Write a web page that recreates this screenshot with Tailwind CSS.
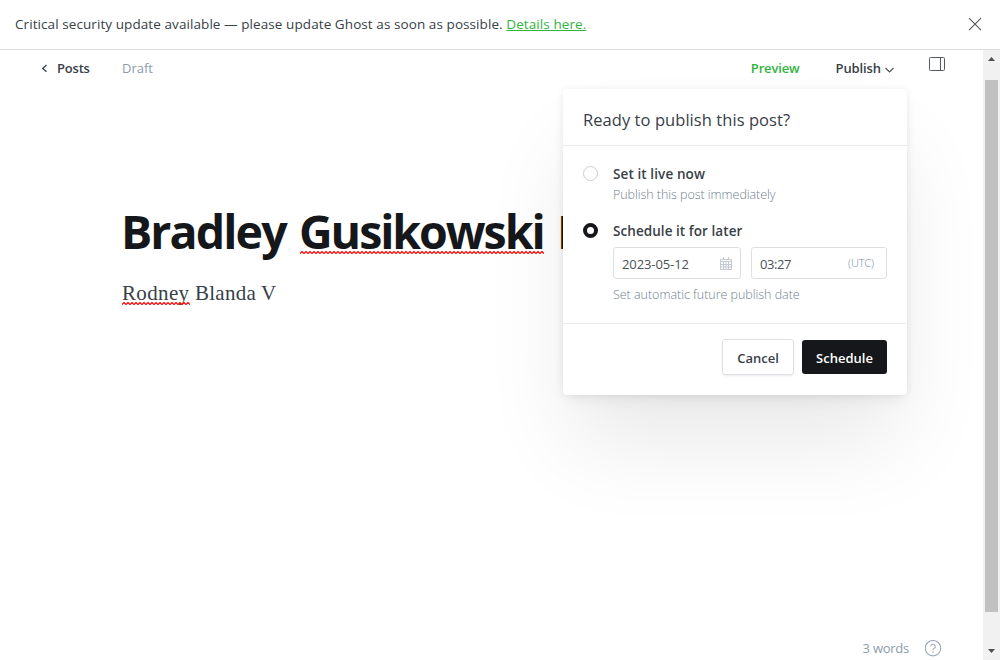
<!DOCTYPE html>
<html lang="en">
<head>
<meta charset="utf-8">
<title>Editor</title>
<script src="https://cdn.jsdelivr.net/npm/@tailwindcss/browser@4"></script>
</head>
<body class="h-[660px] w-[1000px] overflow-hidden bg-white font-['Open_Sans',sans-serif] text-[#394047]">
<div class="flex h-full flex-col">
  <div class="flex h-[50px] shrink-0 items-center justify-between border-b border-[#dddedf] pl-[15px] pr-[18px]">
    <p class="-mt-px whitespace-nowrap text-[13.5px] leading-5 tracking-[0.08px]">Critical security update available — please update Ghost as soon as possible. <a class="text-[#30b43c] underline">Details here.</a></p>
    <svg class="-mt-px" width="14" height="14" viewBox="0 0 14 14" fill="none" stroke="#50565c" stroke-width="1.1"><path d="M1 1.2l12 12M13 1.2l-12 12"/></svg>
  </div>
  <div class="flex min-h-0 flex-1">
    <main class="relative flex w-[983px] flex-col">
      <header class="flex h-9 items-center text-[13px] leading-5">
        <svg class="ml-[41px]" width="7" height="9" viewBox="0 0 7 9" fill="none" stroke="#394047" stroke-width="1.3"><path d="M5.5 1L1.7 4.4l3.8 3.4"/></svg>
        <span class="ml-[9px] w-[65px] font-semibold tracking-[-0.2px]">Posts</span>
        <span class="text-[#8c9cab]">Draft</span>
        <span class="ml-auto font-semibold tracking-[-0.15px] text-[#30b43c]">Preview</span>
        <span class="ml-9 font-semibold tracking-[-0.1px]">Publish</span>
        <svg class="ml-[4px] mt-1" width="9" height="6" viewBox="0 0 9 6" fill="none" stroke="#50565c" stroke-width="1.2"><path d="M.5 1l4 4 4-4"/></svg>
        <svg class="-mt-2 ml-[35px] mr-[38px]" width="16" height="14" viewBox="0 0 16 14" fill="none" stroke="#555b61"><rect x=".5" y=".5" width="15" height="13" rx="1"/><path d="M11.5 .5v13"/></svg>
      </header>
      <article class="pl-[122px] pt-[114px]">
        <h1 class="flex h-[62px] items-center whitespace-nowrap text-[46.5px] font-bold leading-[62px] tracking-[-1.9px] text-[#15171a]"><span class="-ml-px w-[179px]">Bradley</span><span class="flex h-[62px] w-[257px] flex-col"><span class="-ml-px h-[51px] tracking-[-2.05px]">Gusikowski</span><svg class="block" width="244" height="3"><defs><pattern id="wave" width="4" height="3" patternUnits="userSpaceOnUse"><path d="M-1 1.5L0 2.5L2 .5L4 2.5L5 1.5" fill="none" stroke="#f00" stroke-width="1.2"/></pattern></defs><rect width="245" height="3" fill="url(#wave)"/></svg></span><span>II</span></h1>
        <p class="mt-[16px] flex h-[30px] gap-[5px] whitespace-nowrap font-['Liberation_Serif',serif] text-[21px] leading-[30px]"><span class="flex flex-col"><span class="h-[24px] tracking-[0.35px]">Rodney</span><svg class="block" width="68" height="3"><rect width="68" height="3" fill="url(#wave)"/></svg></span><span class="tracking-[0.25px]">Blanda V</span></p>
      </article>
      <footer class="mb-px mr-[41px] mt-auto flex h-5 items-center justify-end gap-4 text-[13px] text-[#8c9cab]">
        <span class="tracking-[-0.25px]">3 words</span>
        <svg class="-mt-[2px]" width="17" height="17" viewBox="0 0 17 17" fill="none" stroke="#9aa8b6" stroke-width="1.1"><circle cx="8" cy="8.2" r="7.7"/><path d="M5.7 6.5a2.3 2.2 0 1 1 3.4 1.9c-.8.4-1.1.8-1.1 1.8M8 11.4v1.3"/></svg>
      </footer>
      <section class="absolute left-[563px] top-[39px] flex h-[306px] w-[344px] flex-col rounded bg-white shadow-[0_0_7px_rgba(0,0,0,0.07),0_8px_16px_-4px_rgba(0,0,0,0.06),0_55px_85px_-8px_rgba(0,0,0,0.09)]">
        <h2 class="h-[57px] border-b border-[#e8eaec] px-5 pt-[19px] text-[16.5px] leading-6 tracking-[0.06px]">Ready to publish this post?</h2>
        <div class="flex h-[178px] flex-col border-b border-[#e8eaec] px-5 pt-[18px]">
          <div class="flex h-[57px]">
            <span class="mt-[2px] size-[15px] shrink-0 rounded-full border border-[#c8d0d9]"></span>
            <div class="ml-[15px]"><div class="text-[13.5px] font-semibold leading-5 tracking-[0.1px]">Set it live now</div><div class="mt-px text-[12.5px] font-light leading-5 tracking-[-0.05px] text-[#6f7f8f]">Publish this post immediately</div></div>
          </div>
          <div class="flex">
            <span class="mt-[2px] size-[15px] shrink-0 rounded-full border-[4.5px] border-[#15171a]"></span>
            <div class="ml-[15px]">
              <div class="text-[13.5px] font-semibold leading-5 tracking-[0.06px]">Schedule it for later</div>
              <div class="mt-[6px] flex gap-[10px] text-[13px] text-[#4a5157]">
                <div class="flex h-8 w-[128px] items-center justify-between rounded-[3px] border border-[#dddfe2] pl-2 pr-2"><span class="mt-[3px] tracking-[-0.1px]">2023-05-12</span><svg width="12" height="13" viewBox="0 0 12 13" fill="none" stroke="#c3cad1" stroke-width="1"><path d="M.5 2.5h11v10H.5zM.5 4.5h11M.5 7.5h11M.5 10h11M3.5 5v7M6 5v7M8.5 5v7M3.5 0v3M8.5 0v3"/></svg></div>
                <div class="flex h-8 w-[136px] items-center justify-between rounded-[3px] border border-[#dddfe2] pl-2 pr-3"><span class="mt-[3px] tracking-[-0.4px]">03:27</span><span class="text-[11px] font-light tracking-[-0.1px] text-[#7c8b9a]">(UTC)</span></div>
              </div>
              <div class="mt-[6px] text-[12.5px] font-light leading-5 tracking-[-0.03px] text-[#6f7f8f]">Set automatic future publish date</div>
            </div>
          </div>
        </div>
        <div class="flex justify-end gap-2 pr-5 pt-[15px] text-[13px] font-semibold">
          <button class="h-[36px] w-[72px] rounded-[3px] border border-[#dde1e5] pt-[3px] shadow-[0_1px_2px_rgba(0,0,0,0.08)]">Cancel</button>
          <button class="mt-px h-[34px] w-[85px] rounded-[3px] bg-[#15171a] pt-[3px] text-white">Schedule</button>
        </div>
      </section>
    </main>
    <div class="flex w-[17px] flex-col items-center bg-[#f1f1f1]">
      <svg class="mt-[7px] block" width="7" height="4"><path d="M0 4h7L3.5 0z" fill="#505050"/></svg>
      <div class="mt-[19px] h-[532px] w-[13px] bg-[#c1c1c1]"></div>
      <svg class="mt-[37px] block" width="7" height="4"><path d="M0 0h7L3.5 4z" fill="#505050"/></svg>
    </div>
  </div>
</div>
</body>
</html>
